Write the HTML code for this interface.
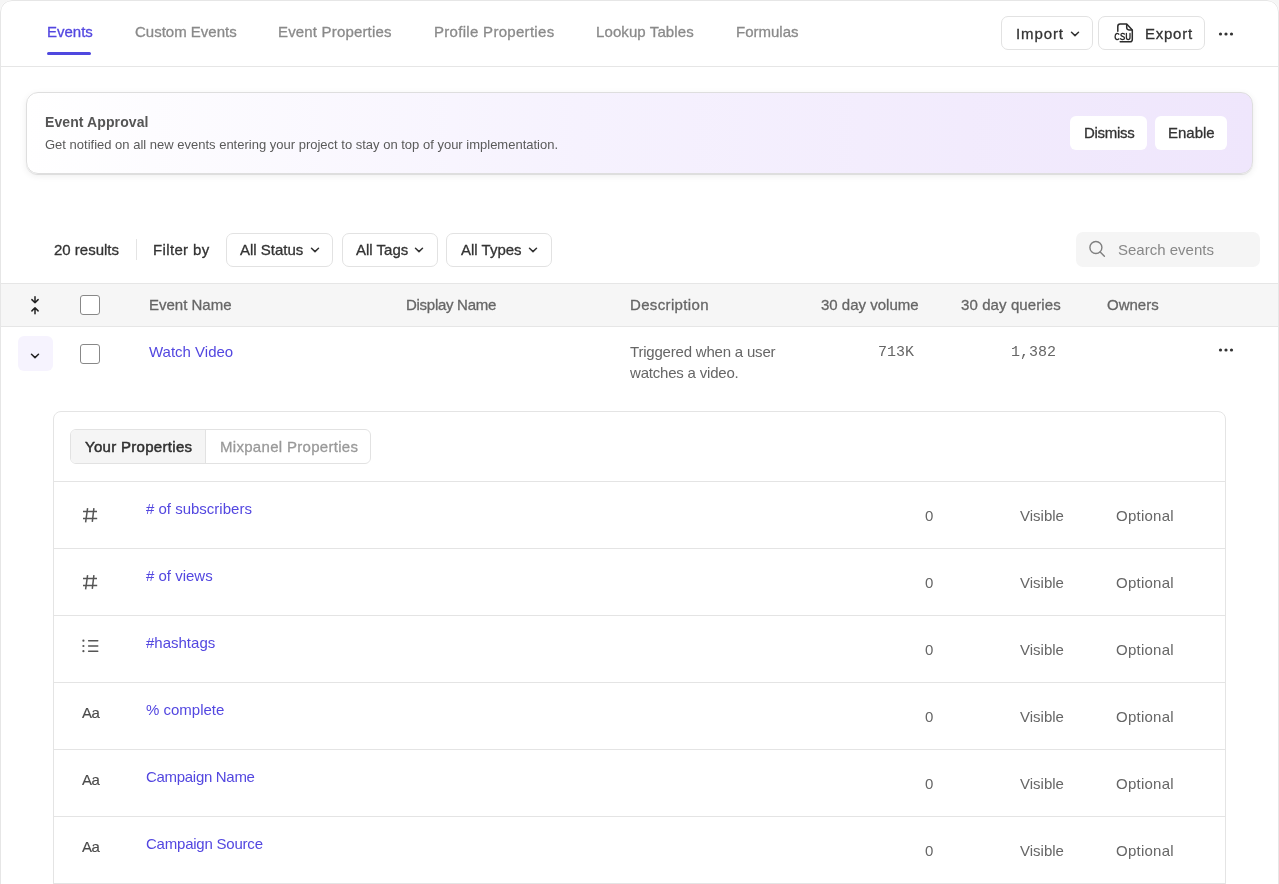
<!DOCTYPE html>
<html><head><meta charset="utf-8">
<style>
*{box-sizing:border-box;margin:0;padding:0}
html,body{width:1279px;height:884px;overflow:hidden;background:#f6f6f6;font-family:"Liberation Sans",sans-serif;}
.card{position:absolute;left:0;top:0;width:1279px;height:940px;background:#fff;border-radius:12px;overflow:hidden}
.cardb{position:absolute;left:0;top:0;width:1279px;height:940px;border:1px solid #e6e6e6;border-radius:12px;pointer-events:none}
.a{position:absolute;white-space:nowrap;will-change:transform}
.t15{font-size:15px;line-height:20px}
.t13{font-size:13px;line-height:18px}
.hdr{position:absolute;left:0;top:0;width:100%;height:67px;border-bottom:1px solid #e6e6e6}
.tab{color:#8a8a8a}
.btn{position:absolute;border:1px solid #e2e2e2;border-radius:7px;background:#fff}
.dark{color:#333}
.m{-webkit-text-stroke:0.3px currentColor}
.purple{color:#5347e0}
.gray6{color:#666}
</style></head><body>
<div class="card">
  <!-- header -->
  <div class="hdr"></div>
  <div class="a m t15 purple" style="left:47px;top:22px">Events</div>
  <div class="a" style="left:47px;top:52px;width:44px;height:3px;border-radius:2px;background:#4f48df"></div>
  <div class="a m t15 tab" style="left:135px;top:22px">Custom Events</div>
  <div class="a m t15 tab" style="left:278px;top:22px;letter-spacing:0.17px">Event Properties</div>
  <div class="a m t15 tab" style="left:434px;top:22px;letter-spacing:0.3px">Profile Properties</div>
  <div class="a m t15 tab" style="left:596px;top:22px;letter-spacing:0.1px">Lookup Tables</div>
  <div class="a m t15 tab" style="left:736px;top:22px">Formulas</div>

  <div class="btn" style="left:1001px;top:16px;width:92px;height:34px"></div>
  <div class="a m t15 dark" style="left:1016px;top:24px;letter-spacing:0.9px">Import</div>
  <svg class="a" style="left:1069px;top:29px" width="12" height="10" viewBox="0 0 12 10"><path d="M2.5 3.2 L6 6.6 L9.5 3.2" fill="none" stroke="#333" stroke-width="1.5" stroke-linecap="round" stroke-linejoin="round"/></svg>
  <div class="btn" style="left:1098px;top:16px;width:107px;height:34px"></div>
  <svg class="a" style="left:1112px;top:22px" width="24" height="22" viewBox="0 0 24 22">
    <path d="M5.8 9.2 V4.4 Q5.8 2.1 8.1 2.1 H14.7 L20.3 7.9 V17.4 Q20.3 19.75 18 19.75 H8.2" fill="none" stroke="#2b2b2b" stroke-width="1.5" stroke-linecap="round" stroke-linejoin="round"/>
    <path d="M14.7 2.1 V5.6 Q14.7 7.9 17 7.9 H20.3" fill="none" stroke="#2b2b2b" stroke-width="1.5" stroke-linejoin="round"/>
    <path d="M6.9 12.2 Q5.8 11.3 4.8 11.5 Q3.1 11.9 3.1 14.5 Q3.1 17.2 4.8 17.5 Q5.8 17.7 6.9 16.9 M12.4 12 Q11.5 11.3 10.5 11.4 Q8.8 11.6 8.9 12.9 Q9 14 10.6 14.4 Q12.6 14.9 12.5 16.2 Q12.4 17.6 10.5 17.6 Q9.3 17.6 8.6 16.8 M14.4 11.4 V15.5 Q14.4 17.6 16.2 17.6 Q18 17.6 18 15.5 V11.4" fill="none" stroke="#2b2b2b" stroke-width="1.3" stroke-linecap="round" stroke-linejoin="round"/>
  </svg>
  <div class="a m t15 dark" style="left:1145px;top:24px;letter-spacing:0.75px">Export</div>
  <svg class="a" style="left:1217px;top:30px" width="18" height="8" viewBox="0 0 18 8"><circle cx="3.5" cy="4" r="1.6" fill="#333"/><circle cx="9" cy="4" r="1.6" fill="#333"/><circle cx="14.5" cy="4" r="1.6" fill="#333"/></svg>

  <!-- banner -->
  <div class="a" style="left:26px;top:92px;width:1227px;height:82px;border-radius:12px;border:1px solid #dedede;background:linear-gradient(90deg,#ffffff 0%,#f6f2fe 45%,#efe6fc 100%);box-shadow:0 1px 1px rgba(0,0,0,0.10),0 2px 7px rgba(0,0,0,0.07)"></div>
  <div class="a t15" style="left:45px;top:112px;color:#555;font-weight:bold;font-size:14px;letter-spacing:0.1px">Event Approval</div>
  <div class="a t13" style="left:45px;top:136px;color:#5a5a5a">Get notified on all new events entering your project to stay on top of your implementation.</div>
  <div class="a" style="left:1070px;top:116px;width:77px;height:34px;background:#fff;border-radius:6px"></div>
  <div class="a m t15 dark" style="letter-spacing:-0.3px;left:1084px;top:123px">Dismiss</div>
  <div class="a" style="left:1155px;top:116px;width:72px;height:34px;background:#fff;border-radius:6px"></div>
  <div class="a m t15 dark" style="left:1168px;top:123px">Enable</div>

  <!-- filter bar -->
  <div class="a m t15 dark" style="left:54px;top:240px">20 results</div>
  <div class="a" style="left:136px;top:239px;width:1px;height:21px;background:#e4e4e4"></div>
  <div class="a m t15 dark" style="left:153px;top:240px;letter-spacing:0.35px">Filter by</div>
  <div class="btn" style="left:226px;top:233px;width:107px;height:34px"></div>
  <div class="a m t15 dark" style="left:240px;top:240px">All Status</div>
  <svg class="a" style="left:309px;top:245px" width="12" height="10" viewBox="0 0 12 10"><path d="M2.5 3.2 L6 6.6 L9.5 3.2" fill="none" stroke="#333" stroke-width="1.5" stroke-linecap="round" stroke-linejoin="round"/></svg>
  <div class="btn" style="left:342px;top:233px;width:96px;height:34px"></div>
  <div class="a m t15 dark" style="left:356px;top:240px">All Tags</div>
  <svg class="a" style="left:413px;top:245px" width="12" height="10" viewBox="0 0 12 10"><path d="M2.5 3.2 L6 6.6 L9.5 3.2" fill="none" stroke="#333" stroke-width="1.5" stroke-linecap="round" stroke-linejoin="round"/></svg>
  <div class="btn" style="left:446px;top:233px;width:106px;height:34px"></div>
  <div class="a m t15 dark" style="left:461px;top:240px">All Types</div>
  <svg class="a" style="left:527px;top:245px" width="12" height="10" viewBox="0 0 12 10"><path d="M2.5 3.2 L6 6.6 L9.5 3.2" fill="none" stroke="#333" stroke-width="1.5" stroke-linecap="round" stroke-linejoin="round"/></svg>

  <div class="a" style="left:1076px;top:232px;width:184px;height:35px;background:#f5f5f5;border-radius:7px"></div>
  <div class="a t15" style="left:1118px;top:240px;color:#888">Search events</div>
  <svg class="a" style="left:1086px;top:239px" width="22" height="22" viewBox="0 0 22 22"><circle cx="9.9" cy="8.5" r="6" fill="none" stroke="#808080" stroke-width="1.4"/><path d="M14.2 12.9 L18.4 17.3" stroke="#808080" stroke-width="1.4" stroke-linecap="round"/></svg>

  <!-- table header -->
  <div class="a" style="left:0;top:283px;width:1279px;height:44px;background:#f6f6f6;border-top:1px solid #e6e6e6;border-bottom:1px solid #e6e6e6"></div>
  <svg class="a" style="left:25px;top:293px" width="20" height="24" viewBox="0 0 20 24"><path d="M10 3.8 V9.7 M6.9 6.6 L10 9.7 L13.1 6.6 M10 20.7 V14.8 M6.9 17.9 L10 14.8 L13.1 17.9" fill="none" stroke="#222" stroke-width="1.5" stroke-linecap="round" stroke-linejoin="round"/></svg>
  <div class="a" style="left:80px;top:295px;width:20px;height:20px;border:1.5px solid #888;border-radius:3px;background:#fff"></div>
  <div class="a m t15 gray6" style="left:149px;top:295px">Event Name</div>
  <div class="a m t15 gray6" style="left:406px;top:295px;letter-spacing:-0.28px">Display Name</div>
  <div class="a m t15 gray6" style="left:630px;top:295px;letter-spacing:0.35px">Description</div>
  <div class="a m t15 gray6" style="left:821px;top:295px">30 day volume</div>
  <div class="a m t15 gray6" style="left:961px;top:295px;letter-spacing:0.1px">30 day queries</div>
  <div class="a m t15 gray6" style="left:1107px;top:295px">Owners</div>

  <!-- event row -->
  <div class="a" style="left:18px;top:336px;width:35px;height:35px;background:#f6f3fe;border-radius:6px"></div>
  <svg class="a" style="left:29px;top:350.5px" width="12" height="10" viewBox="0 0 12 10"><path d="M2.5 3.2 L6 6.6 L9.5 3.2" fill="none" stroke="#222" stroke-width="1.5" stroke-linecap="round" stroke-linejoin="round"/></svg>
  <svg class="a" style="left:1217px;top:346px" width="18" height="8" viewBox="0 0 18 8"><circle cx="3.5" cy="4" r="1.6" fill="#333"/><circle cx="9" cy="4" r="1.6" fill="#333"/><circle cx="14.5" cy="4" r="1.6" fill="#333"/></svg>
  <div class="a" style="left:80px;top:344px;width:20px;height:20px;border:1.5px solid #888;border-radius:3px;background:#fff"></div>
  <div class="a t15 purple" style="left:149px;top:342px">Watch Video</div>
  <div class="a gray6" style="left:630px;top:341px;font-size:15px;line-height:21px;letter-spacing:-0.2px">Triggered when a user<br>watches a video.</div>
  <div class="a" style="left:860px;top:343px;width:54px;text-align:right;font-family:'Liberation Mono',monospace;font-size:15px;line-height:20px;color:#666">713K</div>
  <div class="a" style="left:990px;top:343px;width:66px;text-align:right;font-family:'Liberation Mono',monospace;font-size:15px;line-height:20px;color:#666">1,382</div>

  <!-- inner panel -->
  <div class="a" style="left:53px;top:411px;width:1173px;height:600px;border:1px solid #e4e4e4;border-radius:8px"></div>
  <div class="a" style="left:70px;top:429px;width:301px;height:35px;border:1px solid #e2e2e2;border-radius:6px;overflow:hidden">
    <div class="a" style="left:0;top:0;width:135px;height:33px;background:#f5f5f5;border-right:1px solid #e2e2e2"></div>
  </div>
  <div class="a m t15 dark" style="-webkit-text-stroke:0.5px #333;color:#2e2e2e;left:85px;top:437px;letter-spacing:0.3px">Your Properties</div>
  <div class="a m t15" style="left:220px;top:437px;color:#999;letter-spacing:0.3px">Mixpanel Properties</div>
  <div class="a" style="left:54px;top:481px;width:1171px;height:1px;background:#e4e4e4"></div>
  <svg class="a" style="left:80px;top:506px" width="20" height="20" viewBox="0 0 20 20"><path d="M7.6 2.1 L5.6 16.4 M13.9 2.1 L12.3 15.8 M3 5.5 H17 M3 12.5 H17.2" fill="none" stroke="#555" stroke-width="1.5" stroke-linecap="butt"/></svg>
  <div class="a t15 purple" style="left:146px;top:499px"># of subscribers</div>
  <div class="a t15 gray6" style="left:925px;top:506px">0</div>
  <div class="a t15 gray6" style="left:1020px;top:506px">Visible</div>
  <div class="a t15 gray6" style="left:1116px;letter-spacing:0.25px;top:506px">Optional</div>
  <div class="a" style="left:54px;top:548px;width:1171px;height:1px;background:#e4e4e4"></div>
  <svg class="a" style="left:80px;top:573px" width="20" height="20" viewBox="0 0 20 20"><path d="M7.6 2.1 L5.6 16.4 M13.9 2.1 L12.3 15.8 M3 5.5 H17 M3 12.5 H17.2" fill="none" stroke="#555" stroke-width="1.5" stroke-linecap="butt"/></svg>
  <div class="a t15 purple" style="left:146px;top:566px"># of views</div>
  <div class="a t15 gray6" style="left:925px;top:573px">0</div>
  <div class="a t15 gray6" style="left:1020px;top:573px">Visible</div>
  <div class="a t15 gray6" style="left:1116px;letter-spacing:0.25px;top:573px">Optional</div>
  <div class="a" style="left:54px;top:615px;width:1171px;height:1px;background:#e4e4e4"></div>
  <svg class="a" style="left:80px;top:636px" width="20" height="20" viewBox="0 0 20 20"><g fill="#555"><circle cx="3.4" cy="4.7" r="1.1"/><circle cx="3.4" cy="10" r="1.1"/><circle cx="3.4" cy="15.2" r="1.1"/></g><path d="M8.6 4.7 H17.8 M8.6 10 H17.8 M8.6 15.2 H17.8" stroke="#555" stroke-width="1.4" stroke-linecap="round"/></svg>
  <div class="a t15 purple" style="left:146px;top:633px">#hashtags</div>
  <div class="a t15 gray6" style="left:925px;top:640px">0</div>
  <div class="a t15 gray6" style="left:1020px;top:640px">Visible</div>
  <div class="a t15 gray6" style="left:1116px;letter-spacing:0.25px;top:640px">Optional</div>
  <div class="a" style="left:54px;top:682px;width:1171px;height:1px;background:#e4e4e4"></div>
  <div class="a t15" style="left:81.5px;top:703px;color:#4a4a4a;-webkit-text-stroke:0.15px #4a4a4a;letter-spacing:-0.6px">Aa</div>
  <div class="a t15 purple" style="letter-spacing:0px;left:146px;top:700px">% complete</div>
  <div class="a t15 gray6" style="left:925px;top:707px">0</div>
  <div class="a t15 gray6" style="left:1020px;top:707px">Visible</div>
  <div class="a t15 gray6" style="left:1116px;letter-spacing:0.25px;top:707px">Optional</div>
  <div class="a" style="left:54px;top:749px;width:1171px;height:1px;background:#e4e4e4"></div>
  <div class="a t15" style="left:81.5px;top:770px;color:#4a4a4a;-webkit-text-stroke:0.15px #4a4a4a;letter-spacing:-0.6px">Aa</div>
  <div class="a t15 purple" style="letter-spacing:-0.3px;left:146px;top:767px">Campaign Name</div>
  <div class="a t15 gray6" style="left:925px;top:774px">0</div>
  <div class="a t15 gray6" style="left:1020px;top:774px">Visible</div>
  <div class="a t15 gray6" style="left:1116px;letter-spacing:0.25px;top:774px">Optional</div>
  <div class="a" style="left:54px;top:816px;width:1171px;height:1px;background:#e4e4e4"></div>
  <div class="a t15" style="left:81.5px;top:837px;color:#4a4a4a;-webkit-text-stroke:0.15px #4a4a4a;letter-spacing:-0.6px">Aa</div>
  <div class="a t15 purple" style="letter-spacing:-0.22px;left:146px;top:834px">Campaign Source</div>
  <div class="a t15 gray6" style="left:925px;top:841px">0</div>
  <div class="a t15 gray6" style="left:1020px;top:841px">Visible</div>
  <div class="a t15 gray6" style="left:1116px;letter-spacing:0.25px;top:841px">Optional</div>
  <div class="a" style="left:54px;top:883px;width:1171px;height:1px;background:#e4e4e4"></div>
  <div class="cardb"></div>
</div>
</body></html>
